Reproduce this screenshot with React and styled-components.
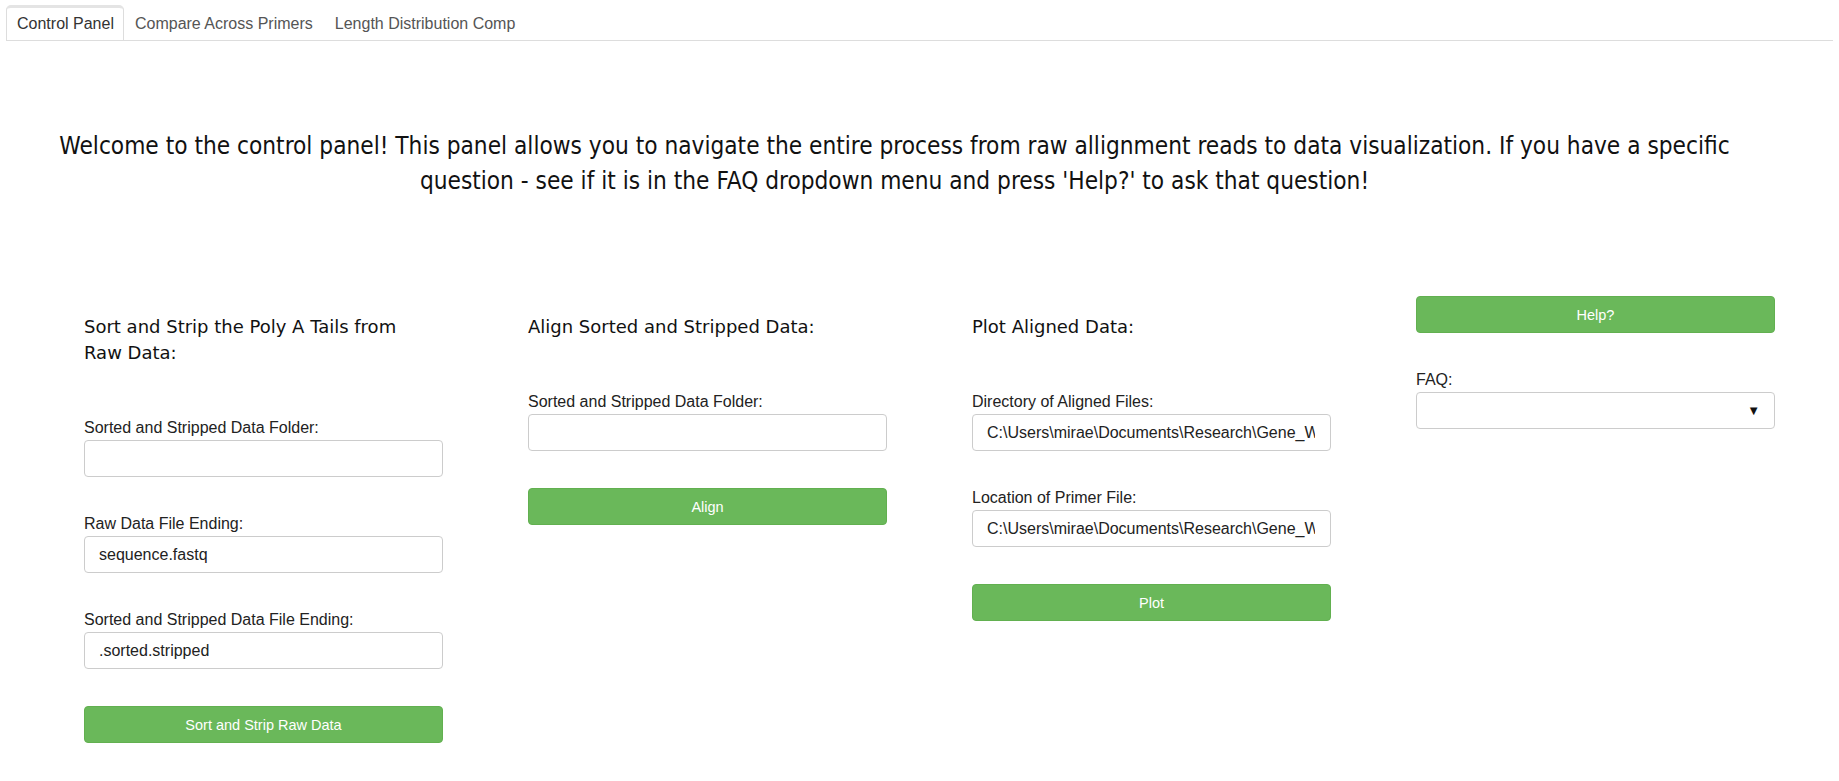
import React from "react";
import styled, { createGlobalStyle } from "styled-components";

const GlobalStyle = createGlobalStyle`
  body {
    margin: 0;
    background: #fff;
    font-family: "Liberation Sans", Arial, sans-serif;
    color: #222;
  }
`;

const Page = styled.div`
  padding: 5px 6px 0;
`;

const TabBar = styled.div`
  display: flex;
  border-bottom: 1px solid #dddddd;
  height: 35px;
`;

const Tab = styled.div`
  padding: 0 ${({ active }) => (active ? "9px" : "10px")} 0 10px;
  font-size: 16px;
  line-height: 31px;
  color: ${({ active }) => (active ? "#333" : "#555")};
  background: ${({ active }) => (active ? "#fff" : "transparent")};
  border: 1px solid ${({ active }) => (active ? "#dddddd" : "transparent")};
  border-top: 3px solid ${({ active }) => (active ? "#e4e4e4" : "transparent")};
  border-bottom: none;
  border-radius: 5px 5px 0 0;
  height: 32px;
  margin-bottom: -1px;
  cursor: pointer;
`;

const Welcome = styled.h3`
  margin: 88px 0 0;
  padding: 0 90px 0 40px;
  text-align: center;
  font-family: "DejaVu Sans Condensed", "DejaVu Sans", sans-serif;
  font-weight: normal;
  font-size: 24.2px;
  line-height: 35px;
  color: #111;
`;

const Columns = styled.div`
  display: grid;
  grid-template-columns: repeat(4, 359px);
  column-gap: 85px;
  padding-left: 78px;
  margin-top: 97px;
  align-items: start;
`;

const Column = styled.div`
  display: flex;
  flex-direction: column;
  gap: 37px;
`;

const SectionTitle = styled.h4`
  margin: 18px 0 52px;
  max-width: 335px;
  font-family: "DejaVu Sans", Verdana, sans-serif;
  font-weight: normal;
  font-size: 18px;
  line-height: 26px;
  color: #111;
`;

const Field = styled.div`
  display: flex;
  flex-direction: column;
  gap: 2px;
`;

const Label = styled.label`
  font-size: 16px;
  line-height: 20px;
  color: #222;
`;

const Input = styled.input`
  box-sizing: border-box;
  width: 100%;
  height: 37px;
  padding: 0 15px 0 14px;
  border: 1px solid #cccccc;
  border-radius: 4px;
  font-family: "Liberation Sans", Arial, sans-serif;
  font-size: 16px;
  color: #222;
  background: #fff;
  outline: none;
`;

const SelectBox = styled.div`
  box-sizing: border-box;
  height: 37px;
  display: flex;
  align-items: center;
  justify-content: flex-end;
  padding: 0 14px;
  border: 1px solid #cccccc;
  border-radius: 4px;
  background: #fff;
  font-size: 13px;
  color: #111;
  cursor: pointer;
`;

const Button = styled.button`
  box-sizing: border-box;
  width: 100%;
  height: 37px;
  border: 1px solid #62b050;
  border-radius: 4px;
  background: #6ab85a;
  color: #fff;
  font-family: "Liberation Sans", Arial, sans-serif;
  font-size: 14.5px;
  cursor: pointer;
`;

const tabs = ["Control Panel", "Compare Across Primers", "Length Distribution Comp"];

const alignedDir = "C:\\Users\\mirae\\Documents\\Research\\Gene_Work\\Aligned";
const primerFile = "C:\\Users\\mirae\\Documents\\Research\\Gene_Work\\primers.txt";

function TextField({ label, value }) {
  return (
    <Field>
      <Label>{label}</Label>
      <Input defaultValue={value || ""} />
    </Field>
  );
}

export default function App() {
  return (
    <Page>
      <GlobalStyle />
      <TabBar>
        {tabs.map((t, i) => (
          <Tab key={t} active={i === 0}>
            {t}
          </Tab>
        ))}
      </TabBar>

      <Welcome>
        Welcome to the control panel! This panel allows you to navigate the entire process from raw
        allignment reads to data visualization. If you have a specific question - see if it is in the
        FAQ dropdown menu and press 'Help?' to ask that question!
      </Welcome>

      <Columns>
        <Column>
          <div>
            <SectionTitle>Sort and Strip the Poly A Tails from Raw Data:</SectionTitle>
            <TextField label="Sorted and Stripped Data Folder:" />
          </div>
          <TextField label="Raw Data File Ending:" value="sequence.fastq" />
          <TextField label="Sorted and Stripped Data File Ending:" value=".sorted.stripped" />
          <Button>Sort and Strip Raw Data</Button>
        </Column>

        <Column>
          <div>
            <SectionTitle>Align Sorted and Stripped Data:</SectionTitle>
            <TextField label="Sorted and Stripped Data Folder:" />
          </div>
          <Button>Align</Button>
        </Column>

        <Column>
          <div>
            <SectionTitle>Plot Aligned Data:</SectionTitle>
            <TextField label="Directory of Aligned Files:" value={alignedDir} />
          </div>
          <TextField label="Location of Primer File:" value={primerFile} />
          <Button>Plot</Button>
        </Column>

        <Column>
          <Button>Help?</Button>
          <Field>
            <Label>FAQ:</Label>
            <SelectBox>▼</SelectBox>
          </Field>
        </Column>
      </Columns>
    </Page>
  );
}
